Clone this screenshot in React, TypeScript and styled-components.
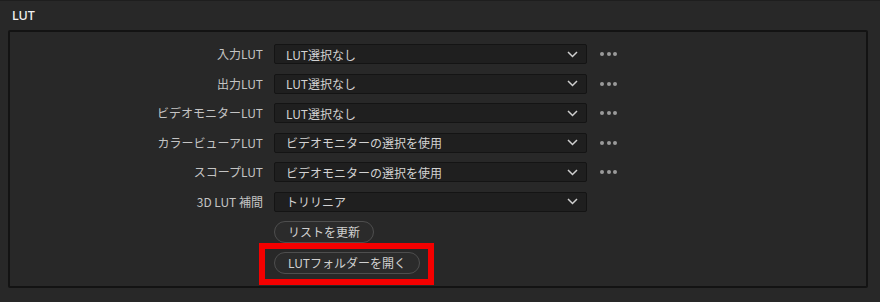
import React from "react";
import styled, { createGlobalStyle } from "styled-components";

const Global = createGlobalStyle`
  html, body { margin: 0; padding: 0; background: #282828; }
  body { font-family: "Noto Sans CJK JP", "Noto Sans", sans-serif; -webkit-font-smoothing: antialiased; }
`;

const Page = styled.div`
  width: 880px;
  height: 302px;
  background: #282828;
  box-sizing: border-box;
  border-top: 1px solid #1e1e1e;
  padding: 0 12px 0 8px;
  display: flex;
  flex-direction: column;
`;

const Header = styled.div`
  height: 29px;
  display: flex;
  align-items: center;
  padding-left: 4px;
  color: #f2f2f2;
  font-size: 12.5px;
  font-weight: 500;
  font-family: "Noto Sans", sans-serif;
`;

const Panel = styled.div`
  height: 258px;
  box-sizing: border-box;
  border: 2px solid #131313;
  border-radius: 2px;
  background: #282828;
  padding: 12px 0 0 0;
  display: flex;
  flex-direction: column;
`;

const Grid = styled.div`
  display: grid;
  grid-template-columns: 253px 313px 40px;
  column-gap: 11px;
  row-gap: 9.6px;
  align-items: center;
`;

const Label = styled.div`
  text-align: right;
  color: #c4c4c4;
  font-size: 12px;
  line-height: 20px;
  white-space: nowrap;
`;

const Select = styled.div`
  height: 20px;
  box-sizing: border-box;
  background: #1f1f1f;
  border: 1px solid #141414;
  border-radius: 2px;
  display: flex;
  align-items: center;
  justify-content: space-between;
  padding: 0 8px 0 11px;
  color: #d2d2d2;
  font-size: 12px;
`;

const Dots = styled.div`
  display: flex;
  gap: 2.5px;
  padding-left: 2px;
  & > span {
    width: 4px;
    height: 4px;
    border-radius: 50%;
    background: #9a9a9a;
  }
`;

const Buttons = styled.div`
  display: flex;
  flex-direction: column;
  align-items: flex-start;
  gap: 9px;
  padding: 9px 0 0 264px;
`;

const Highlight = styled.div`
  position: relative;
  &::after {
    content: "";
    position: absolute;
    left: -15px;
    top: -9px;
    right: -14px;
    bottom: -11px;
    border: 6px solid #f40000;
    pointer-events: none;
  }
`;

const Pill = styled.button<{ $px: number }>`
  height: 22px;
  box-sizing: border-box;
  border: 1px solid #4e4e4e;
  border-radius: 11px;
  background: #2b2b2b;
  color: #d0d0d0;
  font-family: "Noto Sans CJK JP", "Noto Sans", sans-serif;
  font-size: 12px;
  padding: 0 ${(p) => p.$px}px;
  display: flex;
  align-items: center;
`;

const Chevron = () => (
  <svg width="11" height="7" viewBox="0 0 11 7">
    <path d="M1 1 L5.5 5.5 L10 1" fill="none" stroke="#cfcfcf" strokeWidth="1.5" />
  </svg>
);

const rows: [string, string, boolean][] = [
  ["入力LUT", "LUT選択なし", true],
  ["出力LUT", "LUT選択なし", true],
  ["ビデオモニターLUT", "LUT選択なし", true],
  ["カラービューアLUT", "ビデオモニターの選択を使用", true],
  ["スコープLUT", "ビデオモニターの選択を使用", true],
  ["3D LUT 補間", "トリリニア", false],
];

export default function App() {
  return (
    <>
      <Global />
      <Page>
        <Header>LUT</Header>
        <Panel>
          <Grid>
            {rows.map(([l, v, d]) => (
              <React.Fragment key={l}>
                <Label>{l}</Label>
                <Select>
                  <span>{v}</span>
                  <Chevron />
                </Select>
                {d ? (
                  <Dots>
                    <span />
                    <span />
                    <span />
                  </Dots>
                ) : (
                  <div />
                )}
              </React.Fragment>
            ))}
          </Grid>
          <Buttons>
            <Pill $px={13}>リストを更新</Pill>
            <Highlight>
              <Pill $px={13}>LUTフォルダーを開く</Pill>
            </Highlight>
          </Buttons>
        </Panel>
      </Page>
    </>
  );
}
